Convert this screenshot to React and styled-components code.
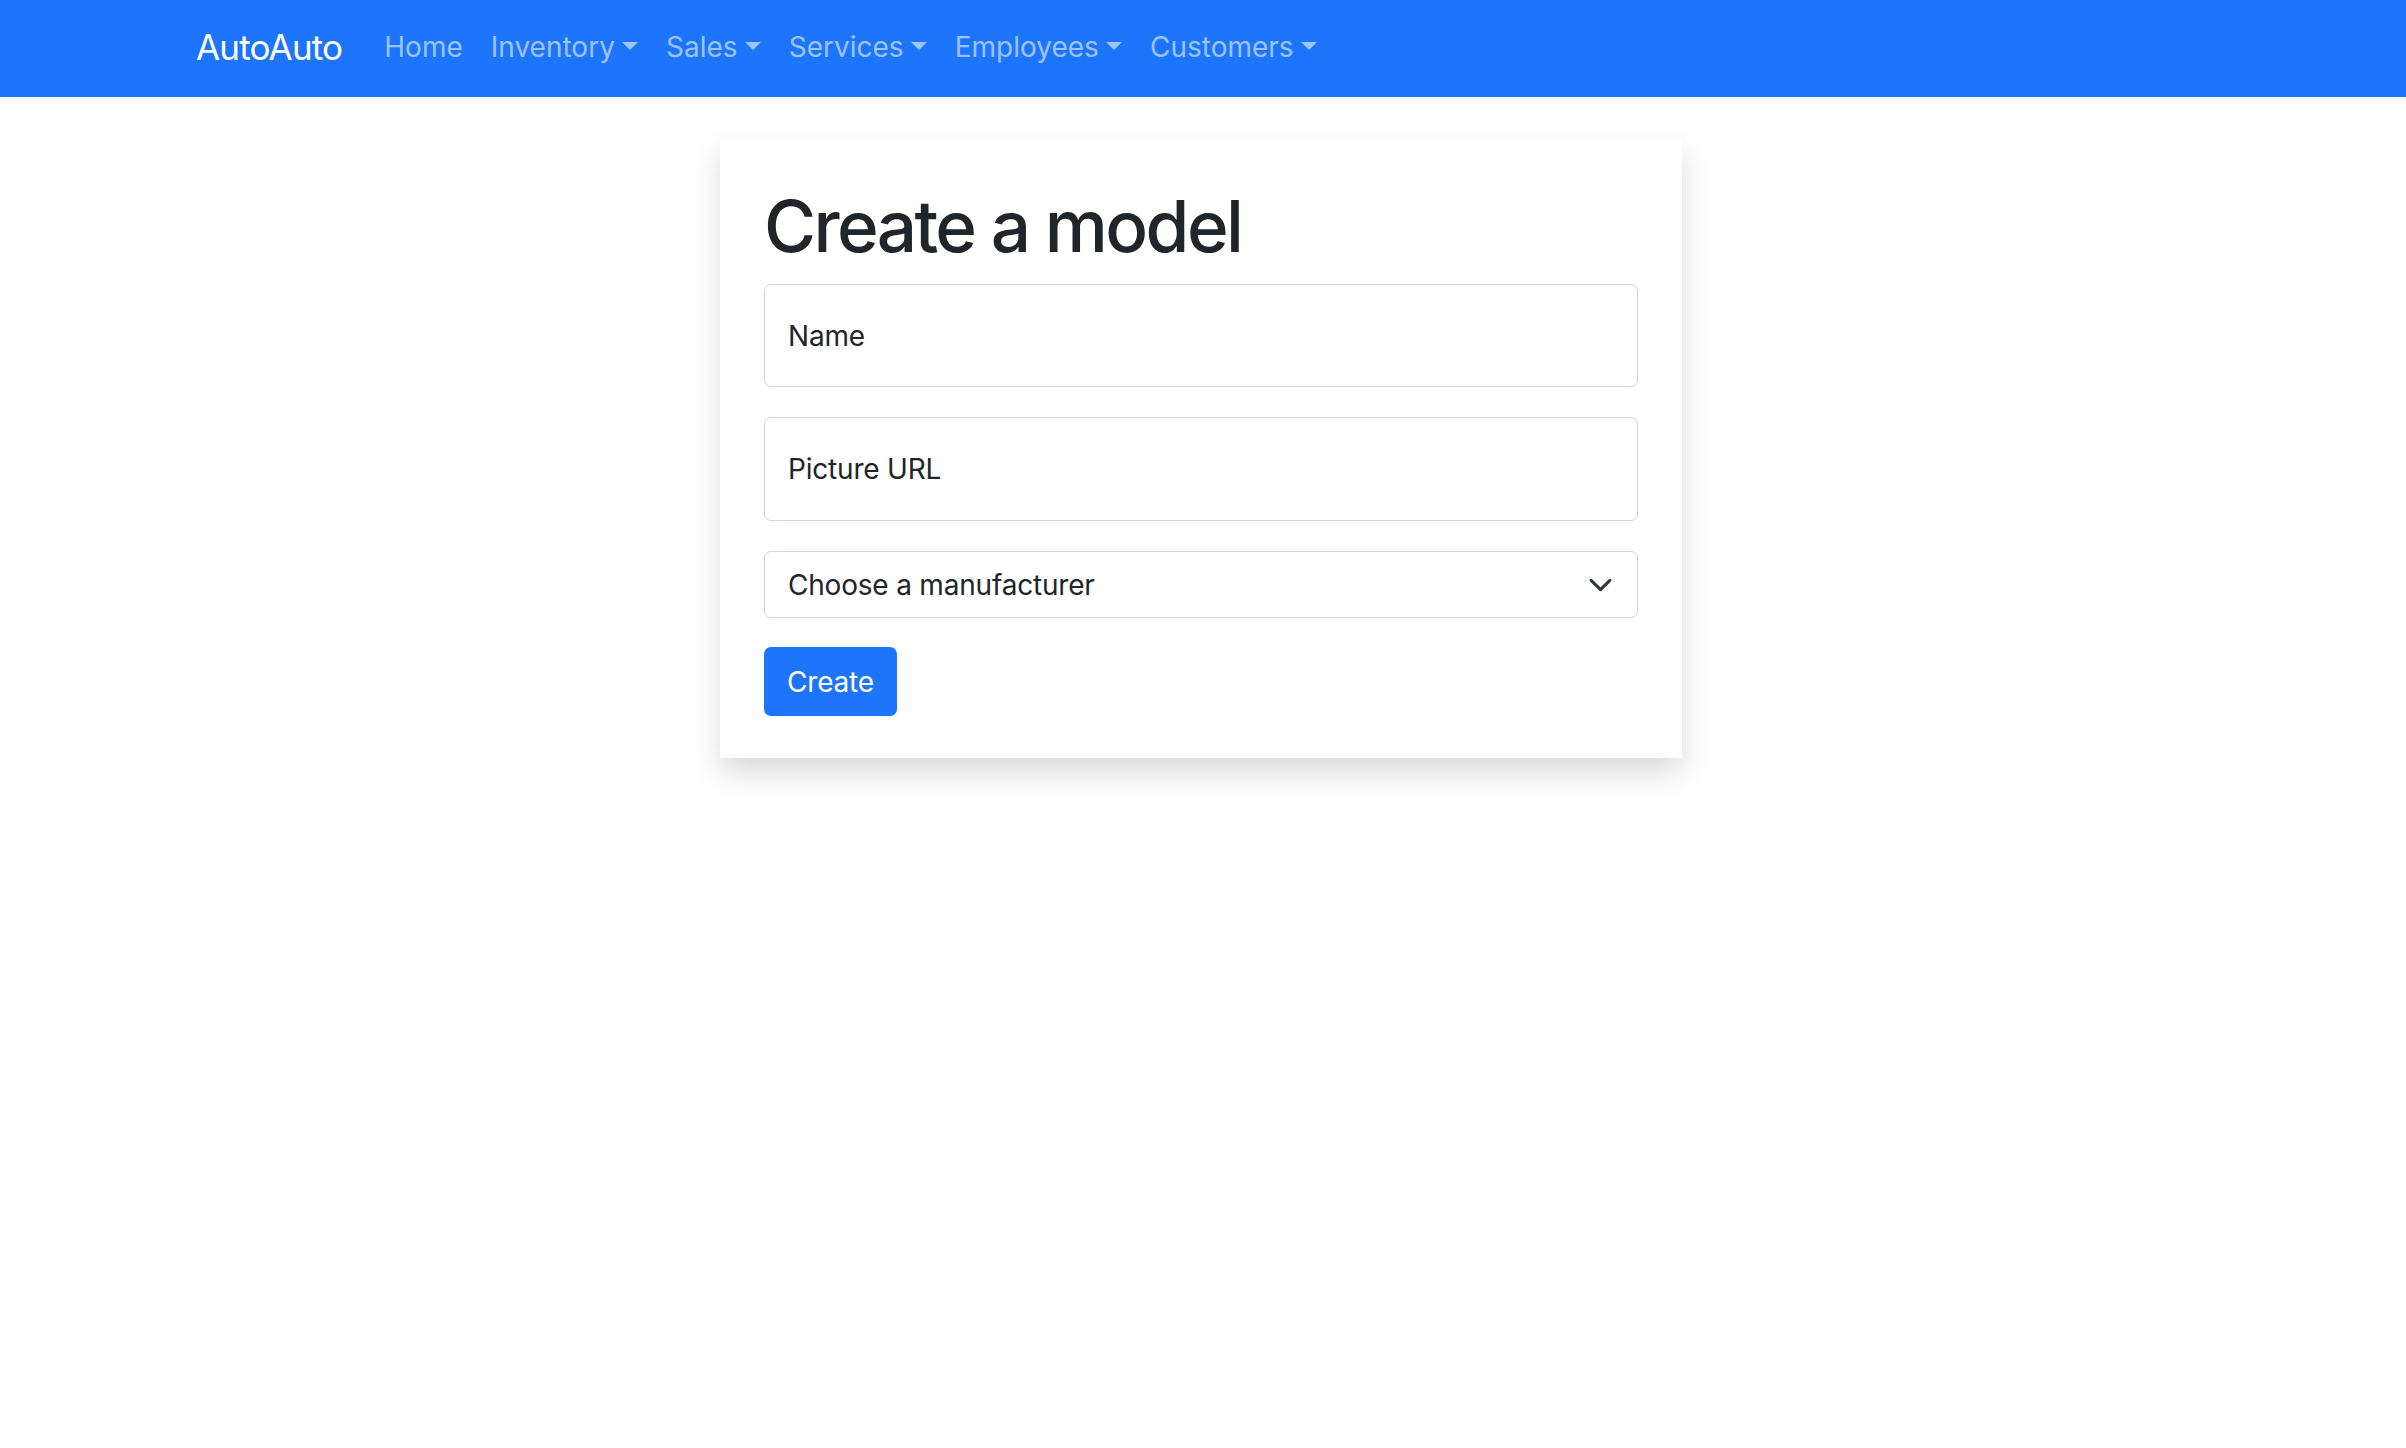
import React from "react";
import styled, { createGlobalStyle } from "styled-components";

const Global = createGlobalStyle`
  * { box-sizing: border-box; }
  body {
    margin: 0;
    background: #ffffff;
    font-family: Inter, "Noto Sans", "Liberation Sans", sans-serif;
    color: #212529;
  }
`;

const Page = styled.div`
  min-height: 100vh;
  background: #ffffff;
`;

const Navbar = styled.nav`
  height: 97px;
  background: #1c75fc;
`;

const NavInner = styled.div`
  max-width: 2014px;
  height: 100%;
  margin: 0 auto;
  padding-bottom: 3px;
  display: flex;
  align-items: center;
`;

const Brand = styled.a`
  font-size: 35px;
  line-height: 1.5;
  letter-spacing: -0.8px;
  color: #ffffff;
  margin-right: 28px;
  text-decoration: none;
  cursor: pointer;
`;

const NavList = styled.ul`
  display: flex;
  list-style: none;
  margin: 0;
  padding: 0;
`;

const NavLink = styled.a`
  display: block;
  padding: 0 14px;
  font-size: 28px;
  line-height: 1.5;
  color: rgba(255, 255, 255, 0.58);
  text-decoration: none;
  cursor: pointer;
  white-space: nowrap;

  ${(p) =>
    p.$dropdown &&
    `
    &::after {
      content: "";
      display: inline-block;
      margin-left: 0.255em;
      vertical-align: 0.255em;
      border-top: 0.3em solid;
      border-right: 0.3em solid transparent;
      border-bottom: 0;
      border-left: 0.3em solid transparent;
    }
  `}
`;

const Main = styled.main`
  display: flex;
  justify-content: center;
  padding: 43px 4px 60px 0;
`;

const Card = styled.section`
  width: 962px;
  padding: 44px 44px 42px;
  background: #ffffff;
  box-shadow: 0 14px 28px rgba(0, 0, 0, 0.15);
`;

const Title = styled.h1`
  margin: 0 0 15px;
  font-size: 71px;
  line-height: 85px;
  font-weight: 500;
  color: #212529;
  letter-spacing: -2.6px;
`;

const Form = styled.form`
  display: flex;
  flex-direction: column;
  align-items: flex-start;
`;

const TextInput = styled.input`
  width: 100%;
  height: ${(p) => p.$h || 103}px;
  margin: 0 0 30px;
  padding: 0 23px;
  border: 1px solid #d1d5db;
  border-radius: 7px;
  font-family: inherit;
  font-size: 28px;
  letter-spacing: -0.2px;
  color: #212529;
  background: #ffffff;
  outline: none;

  &::placeholder {
    color: #212529;
    opacity: 1;
  }
`;

const SelectWrap = styled.div`
  position: relative;
  width: 100%;
  margin-bottom: 29px;
`;

const Select = styled.select`
  appearance: none;
  -webkit-appearance: none;
  width: 100%;
  height: 67px;
  padding: 0 70px 0 23px;
  border: 1px solid #d1d5db;
  border-radius: 7px;
  font-family: inherit;
  font-size: 28px;
  letter-spacing: -0.2px;
  color: #212529;
  background: #ffffff;
  outline: none;
`;

const Chevron = styled.svg`
  position: absolute;
  right: 25px;
  top: 50%;
  width: 25px;
  height: 25px;
  transform: translateY(-50%);
  pointer-events: none;
`;

const Button = styled.button`
  height: 69px;
  padding: 0 23px;
  border: none;
  border-radius: 7px;
  background: #1c75fc;
  color: #ffffff;
  font-family: inherit;
  font-size: 28px;
  letter-spacing: -0.2px;
  cursor: pointer;
`;

const links = [
  { label: "Home" },
  { label: "Inventory", dropdown: true },
  { label: "Sales", dropdown: true },
  { label: "Services", dropdown: true },
  { label: "Employees", dropdown: true },
  { label: "Customers", dropdown: true },
];

export default function App() {
  return (
    <Page>
      <Global />
      <Navbar>
        <NavInner>
          <Brand>AutoAuto</Brand>
          <NavList>
            {links.map((l) => (
              <li key={l.label}>
                <NavLink $dropdown={l.dropdown}>{l.label}</NavLink>
              </li>
            ))}
          </NavList>
        </NavInner>
      </Navbar>
      <Main>
        <Card>
          <Title>Create a model</Title>
          <Form onSubmit={(e) => e.preventDefault()}>
            <TextInput placeholder="Name" />
            <TextInput placeholder="Picture URL" $h={104} />
            <SelectWrap>
              <Select defaultValue="">
                <option value="">Choose a manufacturer</option>
              </Select>
              <Chevron viewBox="0 0 16 16" fill="none">
                <path
                  d="m2 5 6 6 6-6"
                  stroke="#343a40"
                  strokeWidth="2"
                  strokeLinecap="round"
                  strokeLinejoin="round"
                />
              </Chevron>
            </SelectWrap>
            <Button type="submit">Create</Button>
          </Form>
        </Card>
      </Main>
    </Page>
  );
}
